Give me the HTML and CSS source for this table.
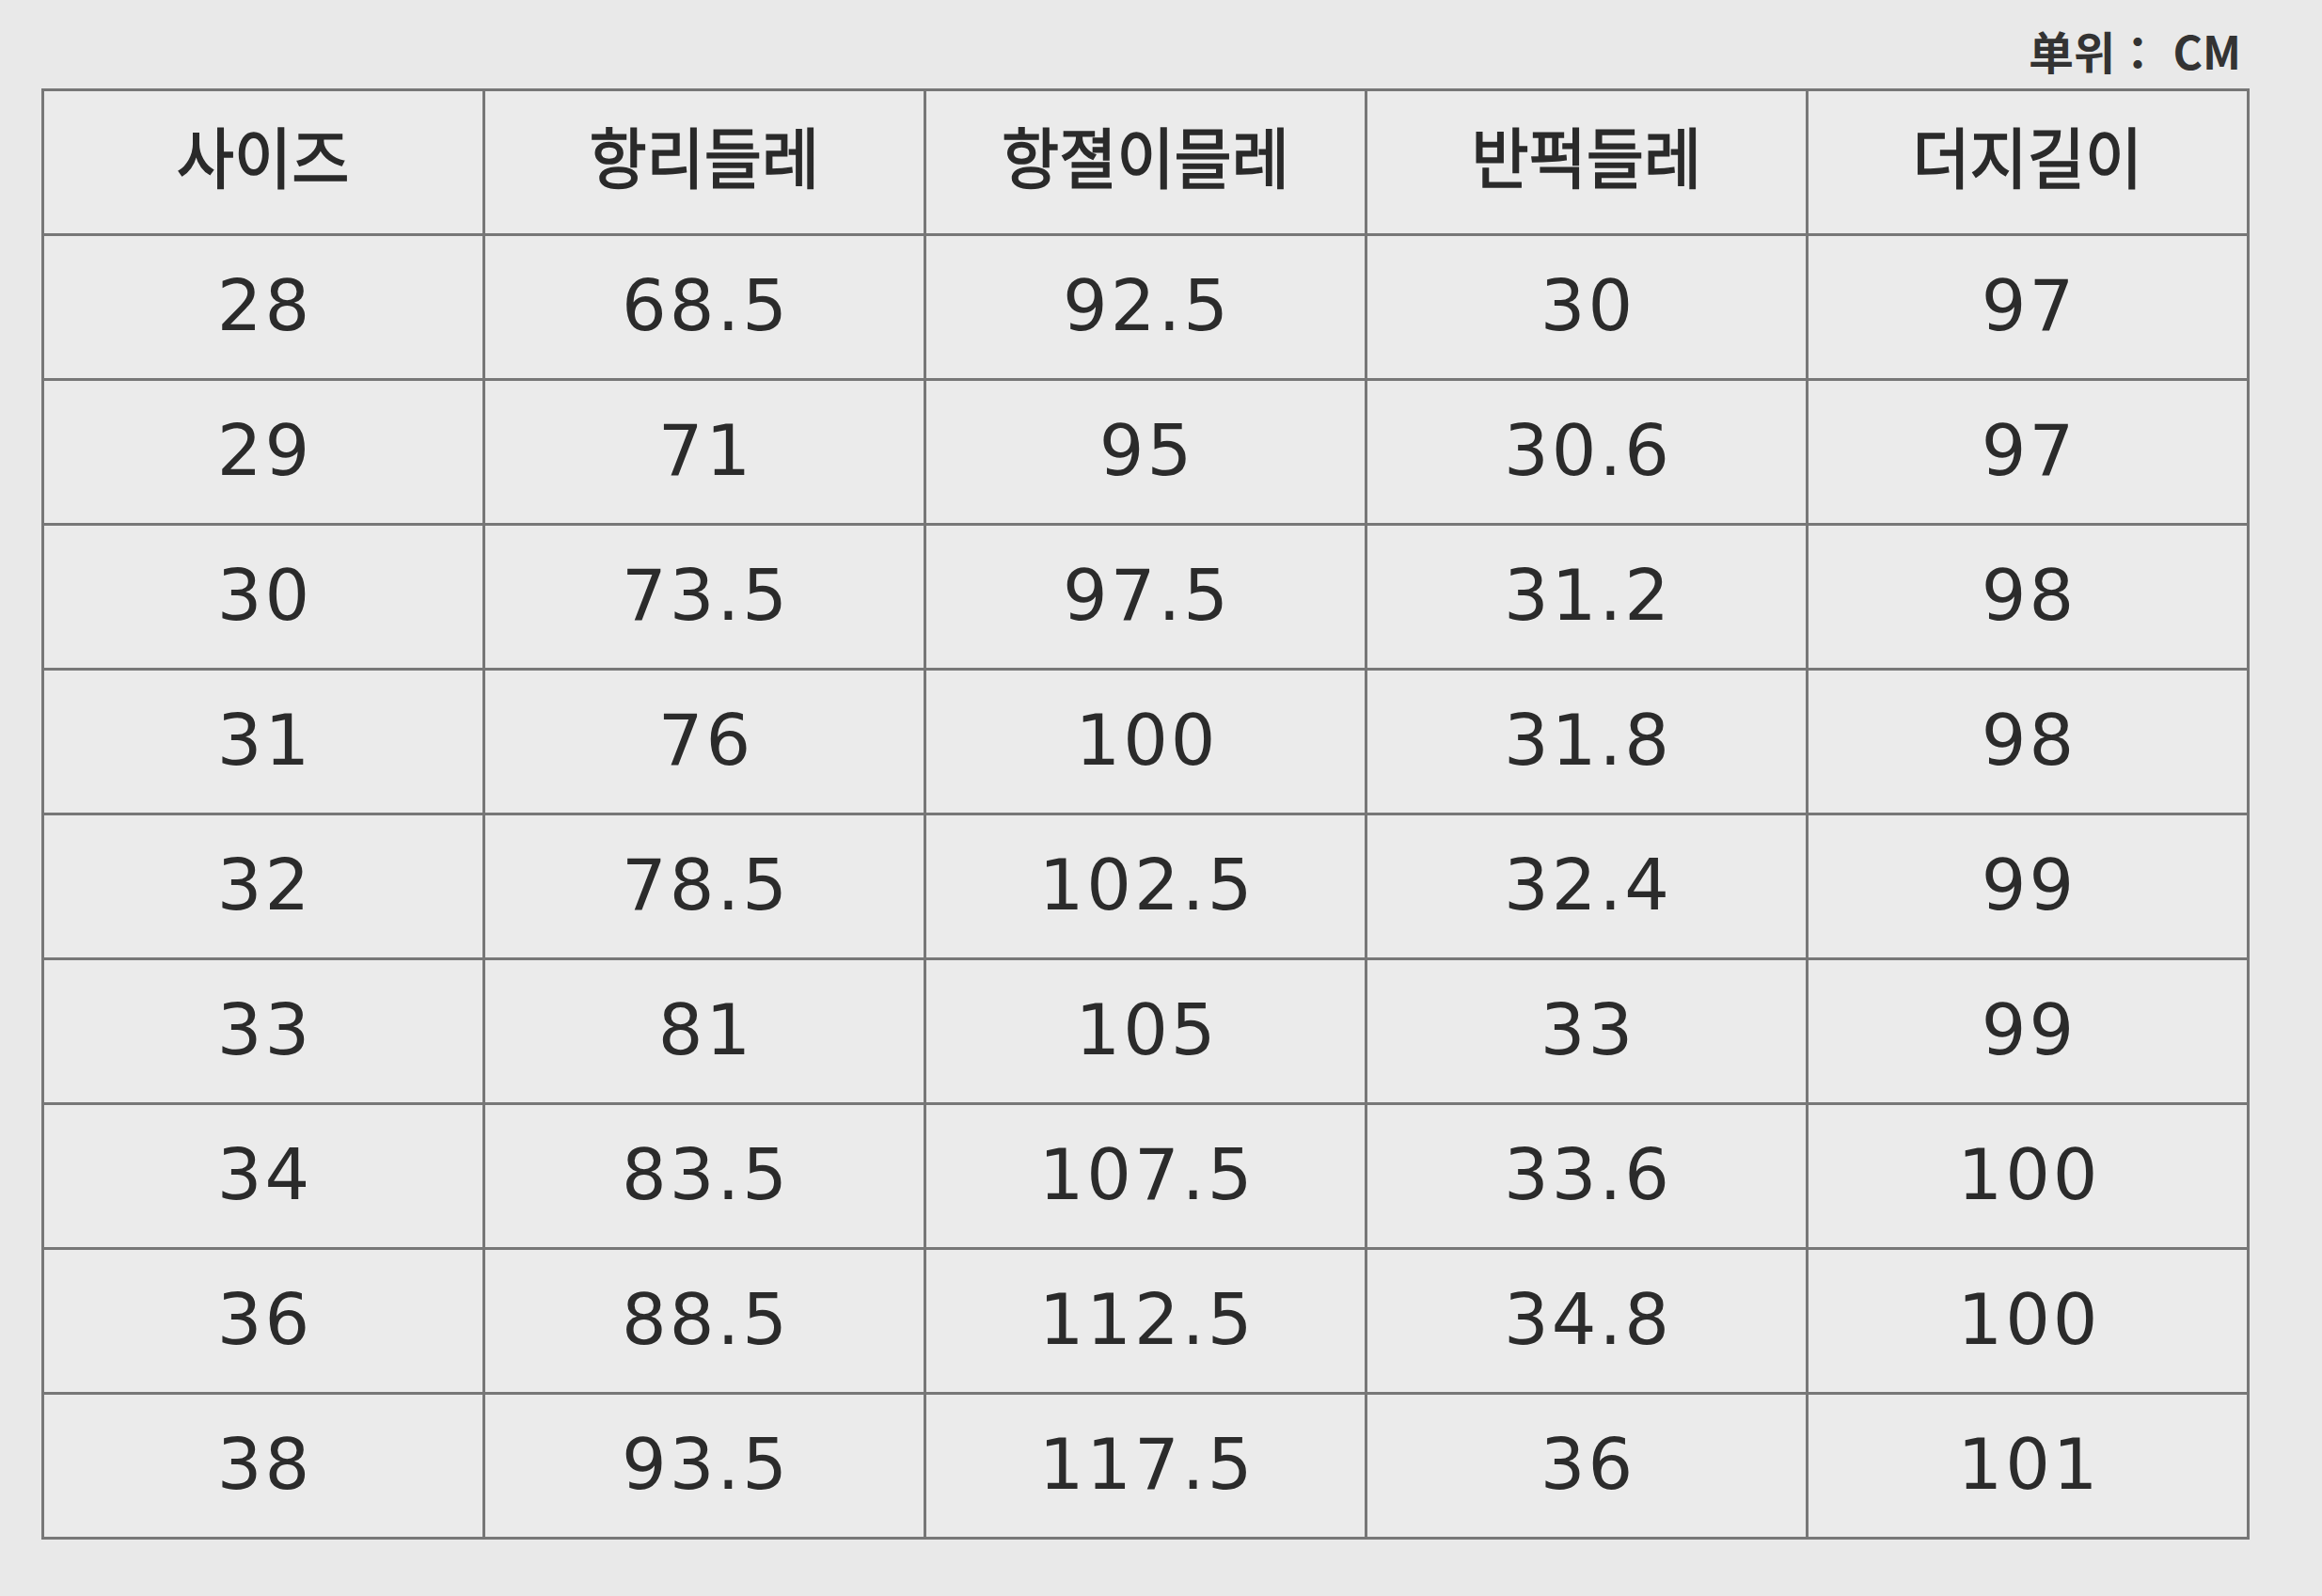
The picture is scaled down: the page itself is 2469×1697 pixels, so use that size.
FILE: index.html
```html
<!DOCTYPE html>
<html lang="ko">
<head>
<meta charset="utf-8">
<title>사이즈표</title>
<link rel="stylesheet" href="styles.css">
</head>
<body>
<div class="sheet">
  <div class="unit"><span>单위： CM</span></div>
  <div class="grid">
    <div class="cell head"><span>사이즈</span></div>
    <div class="cell head"><span>항리들레</span></div>
    <div class="cell head"><span>항졀이믈레</span></div>
    <div class="cell head"><span>반퍽들레</span></div>
    <div class="cell head"><span>더지길이</span></div>

    <div class="cell num">28</div><div class="cell num">68.5</div><div class="cell num">92.5</div><div class="cell num">30</div><div class="cell num">97</div>
    <div class="cell num">29</div><div class="cell num">71</div><div class="cell num">95</div><div class="cell num">30.6</div><div class="cell num">97</div>
    <div class="cell num">30</div><div class="cell num">73.5</div><div class="cell num">97.5</div><div class="cell num">31.2</div><div class="cell num">98</div>
    <div class="cell num">31</div><div class="cell num">76</div><div class="cell num">100</div><div class="cell num">31.8</div><div class="cell num">98</div>
    <div class="cell num">32</div><div class="cell num">78.5</div><div class="cell num">102.5</div><div class="cell num">32.4</div><div class="cell num">99</div>
    <div class="cell num">33</div><div class="cell num">81</div><div class="cell num">105</div><div class="cell num">33</div><div class="cell num">99</div>
    <div class="cell num">34</div><div class="cell num">83.5</div><div class="cell num">107.5</div><div class="cell num">33.6</div><div class="cell num">100</div>
    <div class="cell num">36</div><div class="cell num">88.5</div><div class="cell num">112.5</div><div class="cell num">34.8</div><div class="cell num">100</div>
    <div class="cell num">38</div><div class="cell num">93.5</div><div class="cell num">117.5</div><div class="cell num">36</div><div class="cell num">101</div>
  </div>
</div>
</body>
</html>
```
FILE: styles.css
```css
html, body {
  margin: 0;
  padding: 0;
}
body {
  width: 2469px;
  height: 1697px;
  overflow: hidden;
  background: #e9e9e9;
  color: #2b2b2b;
  font-family: "Noto Sans CJK KR", "Noto Sans CJK SC", "Noto Sans", sans-serif;
}
.sheet {
  width: 2348px;
  padding-left: 44px;
}
.unit {
  height: 94px;
  box-sizing: border-box;
  padding-top: 12px;
  padding-right: 9px;
  display: flex;
  justify-content: flex-end;
  align-items: center;
  font-family: "Noto Sans CJK KR", "Noto Sans CJK SC", sans-serif;
  font-weight: 700;
  font-size: 48px;
  line-height: 1;
  color: #333333;
}
.grid {
  display: grid;
  grid-template-columns: repeat(5, 1fr);
  grid-auto-rows: 151px;
  gap: 3px;
  padding: 3px;
  background: #777777;
}
.cell {
  background: #ebebeb;
  display: flex;
  align-items: center;
  justify-content: center;
}
.head span {
  display: inline-block;
  font-size: 70px;
  font-weight: 400;
  -webkit-text-stroke: 1.6px #2a2a2a;
  line-height: 1;
  transform: translateY(-8px) scaleX(0.95);
  color: #2a2a2a;
}
.num {
  font-family: "DejaVu Sans", "Liberation Sans", sans-serif;
  font-size: 75px;
  letter-spacing: 3px;
  line-height: 1;
  color: #2b2b2b;
  padding-left: 3px;
  padding-bottom: 3px;
}
```
